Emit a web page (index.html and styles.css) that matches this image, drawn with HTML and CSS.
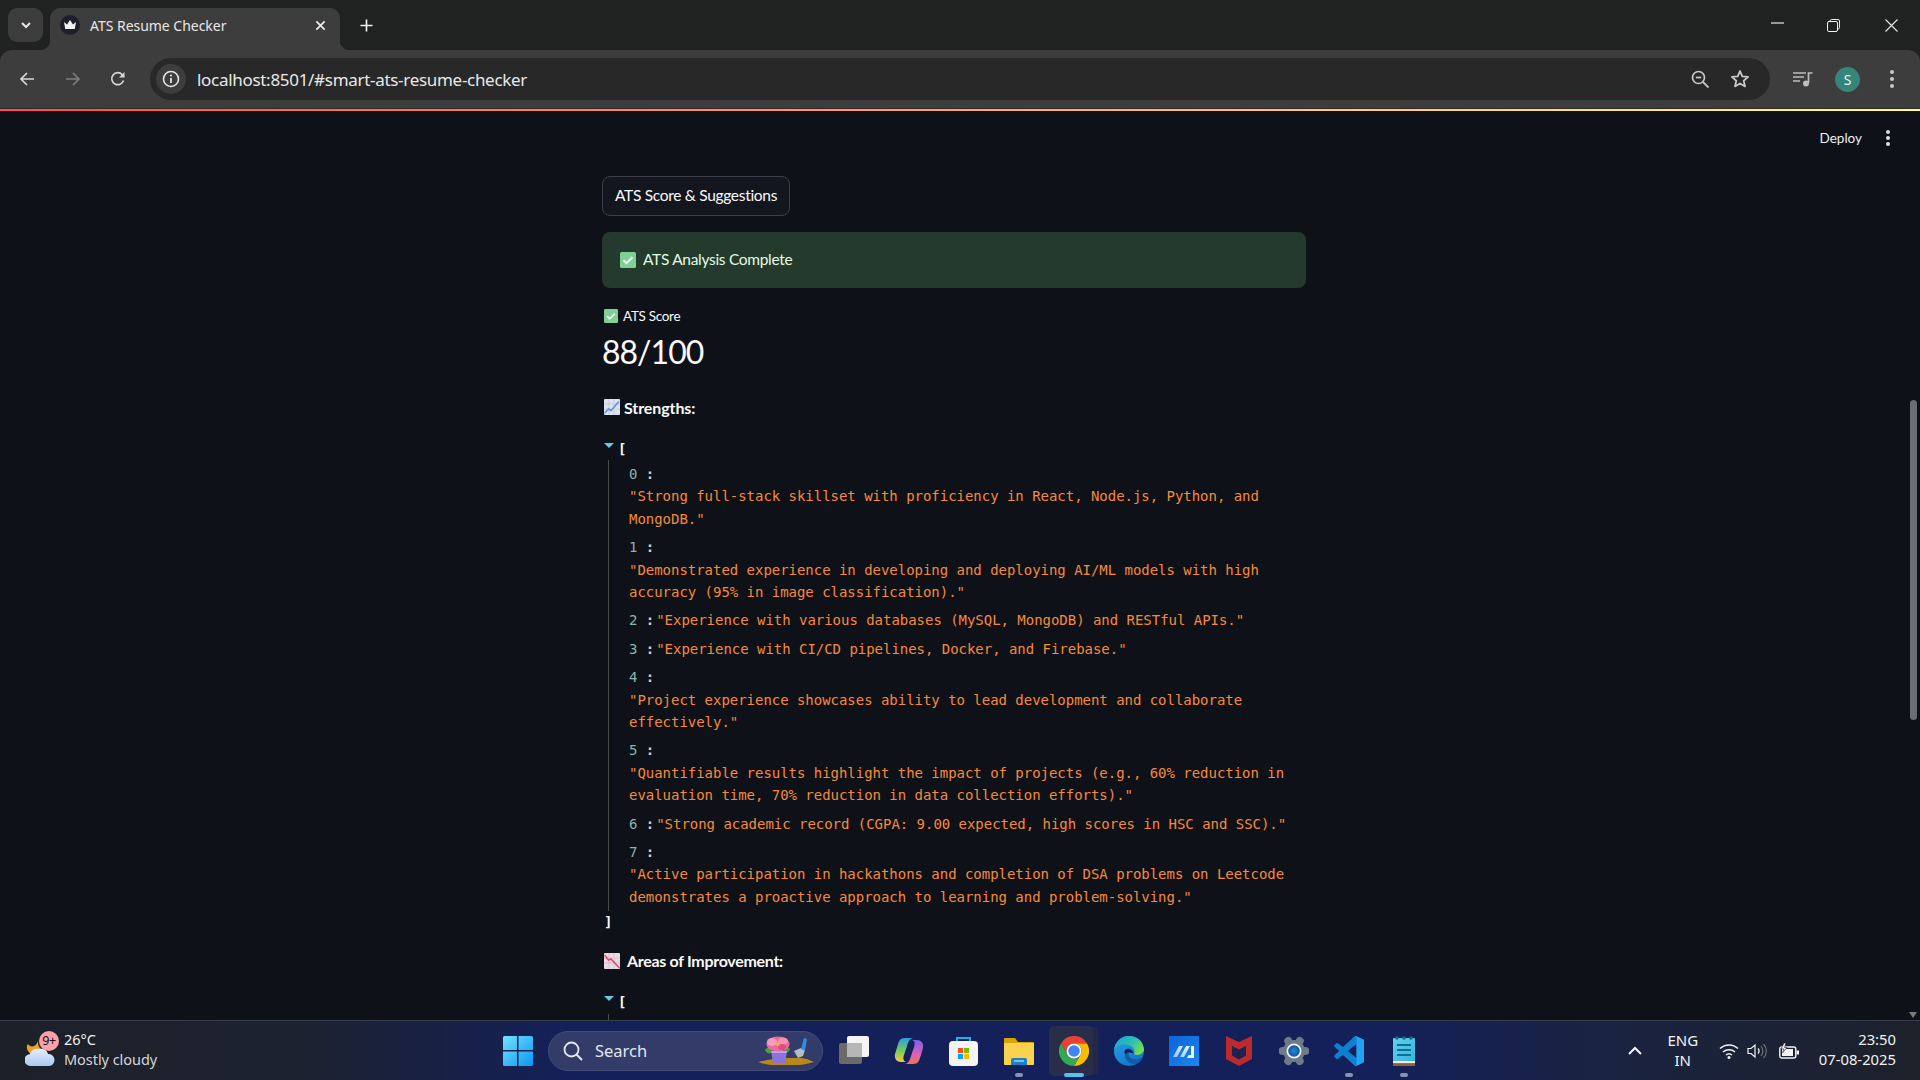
FILE: index.html
```html
<!DOCTYPE html>
<html lang="en">
<head>
<meta charset="utf-8">
<title>ATS Resume Checker</title>
<link rel="stylesheet" href="styles.css">
</head>
<body>
<div class="screen">
  <header class="chrome">
    <div class="tabstrip">
      <div class="tabsearch">
        <svg class="ic12" viewBox="0 0 12 12"><path d="M2 4l4 4 4-4" fill="none" stroke="#e8e8e8" stroke-width="2"/></svg>
      </div>
      <div class="tab">
        <span class="favicon"><svg viewBox="0 0 20 20" width="20" height="20"><circle cx="10" cy="10" r="10" fill="#1d1f2b"/><path d="M4 7l3 2.500L10 5l3 4.500L16 7l-1.200 7H5.200z" fill="#f2f2f2"/></svg></span>
        <span class="tabtitle">ATS Resume Checker</span>
        <svg class="tabclose" viewBox="0 0 12 12"><path d="M1.500 1.500l9 9M10.500 1.500l-9 9" stroke="#f0f0f0" stroke-width="1.800"/></svg>
      </div>
      <svg class="newtab" viewBox="0 0 14 14"><path d="M7 .5v13M.5 7h13" stroke="#f0f0f0" stroke-width="1.800"/></svg>
      <div class="wincontrols">
        <svg class="win-min" viewBox="0 0 13 2"><path d="M0 1h13" stroke="#e8e8e8" stroke-width="1.200"/></svg>
        <svg class="win-max" viewBox="0 0 13 13"><path d="M3 2.500V2a1.500 1.500 0 0 1 1.500-1.500H11A1.500 1.500 0 0 1 12.500 2v6.500A1.500 1.500 0 0 1 11 10h-.5" fill="none" stroke="#e8e8e8"/><rect x=".5" y="2.500" width="10" height="10" rx="1.500" fill="none" stroke="#f4f4f4"/></svg>
        <svg class="win-close" viewBox="0 0 13 13"><path d="M.5.500l12 12M12.500.500l-12 12" stroke="#e8e8e8" stroke-width="1.100"/></svg>
      </div>
    </div>
    <div class="toolbar">
      <svg class="nav nav-back" viewBox="0 0 16 16"><path d="M15 8H2M8 2L2 8l6 6" fill="none" stroke="#d6d6d6" stroke-width="1.700"/></svg>
      <svg class="nav nav-fwd" viewBox="0 0 16 16"><path d="M1 8h13M8 2l6 6-6 6" fill="none" stroke="#7d7d7d" stroke-width="1.700"/></svg>
      <svg class="nav nav-reload" viewBox="0 0 16 16"><path d="M13.500 9.500A6 6 0 1 1 12.300 3.700L14 5.500" fill="none" stroke="#d6d6d6" stroke-width="1.700"/><path d="M14.500 1v5.500H9z" fill="#d6d6d6"/></svg>
      <div class="omnibox">
        <span class="infochip"><svg viewBox="0 0 18 18" width="18" height="18"><circle cx="9" cy="9" r="7.500" fill="none" stroke="#e6e6e6" stroke-width="1.600"/><path d="M9 8v5" stroke="#e6e6e6" stroke-width="1.800"/><circle cx="9" cy="5.500" r="1.100" fill="#e6e6e6"/></svg></span>
        <span class="url">localhost:8501/#smart-ats-resume-checker</span>
        <svg class="omni-zoom" viewBox="0 0 18 18"><circle cx="7.500" cy="7.500" r="6" fill="none" stroke="#c8c8c8" stroke-width="1.700"/><path d="M12 12l5.500 5.500" stroke="#c8c8c8" stroke-width="1.800"/><path d="M4.800 7.500h5.400" stroke="#c8c8c8" stroke-width="1.700"/></svg>
        <svg class="omni-star" viewBox="0 0 20 20"><path d="M10 2l2.300 5.400 5.800.5-4.400 3.800 1.300 5.700-5-3-5 3 1.300-5.700L1.900 7.900l5.800-.5z" fill="none" stroke="#c8c8c8" stroke-width="1.800" stroke-linejoin="round"/></svg>
      </div>
      <svg class="tool-queue" viewBox="0 0 20 16"><path d="M0 2h13M0 6h11M0 10h7" stroke="#bdbdbd" stroke-width="1.700"/><path d="M15 2h4.500M15.500 1.500V12" stroke="#bdbdbd" stroke-width="1.700" fill="none"/><circle cx="13" cy="12.500" r="3" fill="#bdbdbd"/></svg>
      <span class="avatar">S</span>
      <span class="kebab"><i></i><i></i><i></i></span>
    </div>
    <div class="accent"></div>
  </header>

  <main class="main">
    <div class="page">
      <div class="appheader">
        <span class="deploy">Deploy</span>
        <span class="appmenu"><i></i><i></i><i></i></span>
      </div>
      <div class="content">
        <div class="btn">ATS Score &amp; Suggestions</div>
        <div class="alert">
          <svg class="emoji16" viewBox="0 0 16 16"><rect width="16" height="16" rx="1.500" fill="#80cf95"/><path d="M3.500 8.200l3 3 6-6" fill="none" stroke="#eefaf1" stroke-width="2"/></svg>
          <span class="alert-text">ATS Analysis Complete</span>
        </div>
        <div class="metric-label">
          <svg class="emoji14" viewBox="0 0 16 16"><rect width="16" height="16" rx="1.500" fill="#80cf95"/><path d="M3.500 8.200l3 3 6-6" fill="none" stroke="#eefaf1" stroke-width="2"/></svg>
          <span>ATS Score</span>
        </div>
        <div class="metric-value">88/100</div>
        <div class="section section-first">
          <svg class="emoji16" viewBox="0 0 16 16"><rect width="16" height="16" rx="1" fill="#dfe3f0"/><path d="M0 5h16M0 10h16M5 0v16M10 0v16" stroke="#b9bfd6" stroke-width=".6"/><path d="M.5 14l4-4 2.500 1.500L15 2.500" fill="none" stroke="#5d8fe0" stroke-width="1.500"/></svg>
          <span>Strengths:</span>
        </div>
        <div class="tree">
          <div class="tree-open"><span class="caret"></span><span class="bracket">[</span></div>
          <div class="tree-body">
            <div class="row"><span class="key">0 <b>:</b></span><span class="val">"Strong full-stack skillset with proficiency in React, Node.js, Python, and MongoDB."</span></div>
            <div class="row"><span class="key">1 <b>:</b></span><span class="val">"Demonstrated experience in developing and deploying AI/ML models with high accuracy (95% in image classification)."</span></div>
            <div class="row"><span class="key">2 <b>:</b></span><span class="val">"Experience with various databases (MySQL, MongoDB) and RESTful APIs."</span></div>
            <div class="row"><span class="key">3 <b>:</b></span><span class="val">"Experience with CI/CD pipelines, Docker, and Firebase."</span></div>
            <div class="row"><span class="key">4 <b>:</b></span><span class="val">"Project experience showcases ability to lead development and collaborate effectively."</span></div>
            <div class="row"><span class="key">5 <b>:</b></span><span class="val">"Quantifiable results highlight the impact of projects (e.g., 60% reduction in evaluation time, 70% reduction in data collection efforts)."</span></div>
            <div class="row"><span class="key">6 <b>:</b></span><span class="val">"Strong academic record (CGPA: 9.00 expected, high scores in HSC and SSC)."</span></div>
            <div class="row"><span class="key">7 <b>:</b></span><span class="val">"Active participation in hackathons and completion of DSA problems on Leetcode demonstrates a proactive approach to learning and problem-solving."</span></div>
          </div>
          <div class="tree-close">]</div>
        </div>
        <div class="section">
          <svg class="emoji16" viewBox="0 0 16 16"><rect width="16" height="16" rx="1" fill="#ecd9e4"/><path d="M0 5h16M0 10h16M5 0v16M10 0v16" stroke="#c9b7c6" stroke-width=".6"/><path d="M.5 2l4 5 2.500-1 8.500 9" fill="none" stroke="#e2476a" stroke-width="1.500"/></svg>
          <span class="section-wide">Areas of Improvement:</span>
        </div>
        <div class="tree">
          <div class="tree-open"><span class="caret"></span><span class="bracket">[</span></div>
          <div class="tree-body"><div class="row">&nbsp;</div></div>
        </div>
      </div>
    </div>
    <div class="scrollbar">
      <div class="thumb"></div>
      <div class="scroll-arrow"></div>
    </div>
  </main>

  <footer class="taskbar">
    <div class="weather">
      <span class="weather-icon">
        <svg viewBox="0 0 30 30" width="30" height="30"><defs><linearGradient id="cloud" x1="0" y1="0" x2="0" y2="1"><stop offset="0" stop-color="#e6effb"/><stop offset="1" stop-color="#a9c8f0"/></linearGradient></defs><path d="M14 2c-2 4-1 9 3 12L10 19C3 19 0 11 3 8c1 2 4 3 6 2 3-1 4-5 5-8z" fill="#efa02a"/><path d="M6 30a6 6 0 0 1-1-12c1-4 5-6 9-5 3-1 8 0 9 5a6 6 0 0 1 1 12z" fill="url(#cloud)"/></svg>
        <span class="badge">9+</span>
      </span>
      <span class="weather-text"><span class="temp">26°C</span><span class="cond">Mostly cloudy</span></span>
    </div>
    <svg class="startbtn" viewBox="0 0 30 30"><defs><linearGradient id="win" x1="0" y1="0" x2="1" y2="1"><stop offset="0" stop-color="#6fe3fb"/><stop offset="1" stop-color="#0c96f5"/></linearGradient></defs><path d="M0 1.500A1.500 1.500 0 0 1 1.500 0H14v14H0zM15.500 0H28.500A1.500 1.500 0 0 1 30 1.500V14H15.500zM0 15.500h14V30H1.500A1.500 1.500 0 0 1 0 28.500zM15.500 15.500H30v13a1.500 1.500 0 0 1-1.500 1.500H15.500z" fill="url(#win)"/></svg>
    <div class="searchbox">
      <svg class="search-ic" viewBox="0 0 20 20"><circle cx="8.500" cy="8.500" r="7" fill="none" stroke="#e6e8f0" stroke-width="1.800"/><path d="M13.500 13.500l5.500 5.500" stroke="#e6e8f0" stroke-width="2"/></svg>
      <span class="search-text">Search</span>
      <svg class="search-art" viewBox="0 0 56 30"><path d="M0 26Q14 23 20 22H44Q50 23 56 26Q46 29 40 29H14Q8 29 0 26z" fill="#b8881a"/><path d="M7 14c2-3 5-3 7 0l-1 3c-2 1-5 0-6-3zM32 13c-2-2-5-2-6 1l1 3c2 0 4-1 5-4z" fill="#4f9a48"/><path d="M36 15l7-3 4 2-2 6-5 2z" fill="#b6bcc4"/><path d="M43 13l3-11 3 1-2 12z" fill="#2e8fe0"/><path d="M13 15h16l-2 12H15z" fill="#8b72dc"/><path d="M13 15h16l-.5 2H13.500z" fill="#b9a6f0"/><ellipse cx="20" cy="8" rx="11.500" ry="7.500" fill="#ec6aa0"/><ellipse cx="14" cy="6" rx="5" ry="4" fill="#f79cc0"/><ellipse cx="25" cy="5" rx="5" ry="3.500" fill="#f58fb6"/><ellipse cx="24" cy="11" rx="4" ry="3" fill="#dd4d84"/><circle cx="20" cy="8" r="2" fill="#f3b23c"/></svg>
    </div>
    <div class="apps">
      <span class="app"><svg viewBox="0 0 30 30"><rect y="7" width="23" height="21" rx="2" fill="#6a6a6a"/><rect x="8" width="22" height="21" rx="2" fill="#f4f4f4"/><rect x="8" y="7" width="15" height="14" fill="#b6b6b6"/></svg></span>
      <span class="app"><svg viewBox="0 0 30 28"><defs><linearGradient id="cp1" x1="0" y1="0" x2="0" y2="1"><stop offset="0" stop-color="#2a9ee2"/><stop offset=".55" stop-color="#7ccb58"/><stop offset="1" stop-color="#f7c83c"/></linearGradient><linearGradient id="cp2" x1="0" y1="0" x2="0" y2="1"><stop offset="0" stop-color="#7d5fe4"/><stop offset=".6" stop-color="#dc62b8"/><stop offset="1" stop-color="#f5704a"/></linearGradient></defs><path d="M19 27C24 27 25 24 26 21L29 11C30 6 27 3 23 3L18 3C21 4 21 7 20 10L16 22C15 25 13 27 10 27Z" fill="url(#cp2)"/><path d="M11 1C6 1 5 4 4 7L1 17C0 22 3 25 7 25L12 25C9 24 9 21 10 18L14 6C15 3 17 1 20 1Z" fill="url(#cp1)"/></svg></span>
      <span class="app"><svg viewBox="0 0 30 30"><path d="M8 7V2h13v5" fill="none" stroke="#19b3e8" stroke-width="2"/><rect y="5" width="29" height="25" rx="4" fill="#f4f4f4"/><rect x="9" y="12" width="5" height="5" fill="#f25022"/><rect x="15" y="12" width="5" height="5" fill="#7fba00"/><rect x="9" y="18" width="5" height="5" fill="#00a4ef"/><rect x="15" y="18" width="5" height="5" fill="#ffb900"/></svg></span>
      <span class="app has-dot"><svg viewBox="0 0 30 30"><path d="M0 3a1 1 0 0 1 1-1h10l3 4h15a1 1 0 0 1 1 1v6H0z" fill="#d9a406"/><path d="M0 7h30v21a1 1 0 0 1-1 1H1a1 1 0 0 1-1-1z" fill="#fbd24e"/><path d="M7 24a2 2 0 0 1 2-2h12a2 2 0 0 1 2 2v5H7z" fill="#1e7fc9"/><path d="M10 25h10" stroke="#9ad0f5" stroke-width="1.500"/></svg></span>
      <span class="app app-active"><svg viewBox="0 0 30 30"><path d="M2 7.500A15 15 0 0 1 28 7.500H15A7.500 7.500 0 0 0 8.500 18.750z" fill="#e94235"/><path d="M28 7.500A15 15 0 0 1 15 30L21.500 18.750A7.500 7.500 0 0 0 15 7.500H28z" fill="#fbbc04"/><path d="M15 30A15 15 0 0 1 2 7.500L8.500 18.750A7.500 7.500 0 0 0 21.500 18.750z" fill="#34a853"/><circle cx="15" cy="15" r="7.500" fill="#fff"/><circle cx="15" cy="15" r="5.800" fill="#4285f4"/></svg><i class="run-bar"></i></span>
      <span class="app"><svg viewBox="0 0 30 30"><defs><linearGradient id="edg1" x1="0" y1="0" x2="1" y2=".6"><stop offset="0" stop-color="#1c9fd8"/><stop offset=".6" stop-color="#2cc2b0"/><stop offset="1" stop-color="#74dc50"/></linearGradient><linearGradient id="edg2" x1="0" y1="0" x2=".7" y2="1"><stop offset="0" stop-color="#29a6e8"/><stop offset="1" stop-color="#1272c8"/></linearGradient></defs><circle cx="15" cy="15" r="15" fill="url(#edg2)"/><path d="M15 0C7 0 1 6 0 14c3-5 9-7 14-5 5 1 8 5 6 9 3 2 7 1 9-2 1-1 1-2 1-3C29 5 23 0 15 0z" fill="url(#edg1)"/><path d="M11 17c-1 6 4 12 12 11 3-2 5-4 6-8-2 3-6 4-10 3-3-1-5-3-4-6z" fill="#0f5ba8"/><path d="M20 18c-1-3-4-6-7-5s-3 3-2 5c2-2 6-2 9 0z" fill="#12205a"/></svg></span>
      <span class="app"><svg viewBox="0 0 30 30"><defs><linearGradient id="mat" x1="0" y1="0" x2="1" y2="1"><stop offset="0" stop-color="#0a66dc"/><stop offset="1" stop-color="#1a86ee"/></linearGradient><linearGradient id="slash" x1="0" y1="1" x2="1" y2="0"><stop offset="0" stop-color="#8fc4f6"/><stop offset="1" stop-color="#f0f8ff"/></linearGradient></defs><rect width="30" height="30" fill="url(#mat)"/><path d="M4 21l6-11h4l-6 11zM11 21l6-11h4l-6 11z" fill="url(#slash)"/><path d="M22 10h3v12h-7l1.500-3H22z" fill="#eef6fe"/></svg></span>
      <span class="app"><svg viewBox="0 0 30 30"><path d="M2 0l13 6 13-6v23l-13 7-13-7z" fill="#bb2a2c"/><path d="M8 10l7 3.500 7-3.500v9.500l-7 4-7-4z" fill="#1b2350"/></svg></span>
      <span class="app"><svg viewBox="0 0 30 30"><defs><radialGradient id="disc"><stop offset="0" stop-color="#2f86d8"/><stop offset="1" stop-color="#0c56a0"/></radialGradient></defs><g stroke="#6f7a87" stroke-width="8" stroke-linecap="round"><path d="M3.500 15h23M9.250 5l11.500 20M20.750 5L9.250 25"/></g><circle cx="15" cy="15" r="11" fill="#6f7a87"/><circle cx="15" cy="15" r="7.500" fill="#f2f4f6"/><circle cx="15" cy="15" r="5.800" fill="url(#disc)"/></svg></span>
      <span class="app has-dot"><svg viewBox="0 0 100 100"><path fill-rule="evenodd" d="M96 11 75 1a6 6 0 0 0-7 1L30 37 13 24a4 4 0 0 0-5 0L2 30a4 4 0 0 0 0 6L17 50 2 64a4 4 0 0 0 0 6L8 76a4 4 0 0 0 5 0L30 63 68 98a6 6 0 0 0 7 1L96 89a6 6 0 0 0 4-5V17a6 6 0 0 0-4-6zM75 27 46 50 75 73z" fill="#0f80d0"/><path d="M68 98a6 6 0 0 0 7 1L96 89a6 6 0 0 0 4-5V17a6 6 0 0 0-4-6L75 1a6 6 0 0 0-7 1c3-2 7 0 7 4V94c0 4-4 6-7 4z" fill="#22a3ef"/></svg></span>
      <span class="app has-dot"><svg viewBox="0 0 30 30"><defs><linearGradient id="pad" x1="0" y1="0" x2="1" y2="1"><stop offset="0" stop-color="#62d0ea"/><stop offset="1" stop-color="#35b4dc"/></linearGradient></defs><rect x="4" y="2" width="22" height="25" rx="1" fill="url(#pad)"/><rect x="4" y="25" width="22" height="2.500" fill="#eeeeee"/><rect x="4" y="27.500" width="22" height="2.500" fill="#a25a22"/><path d="M8 9h14M8 14h14M8 19h14" stroke="#0c6f9a" stroke-width="2"/><circle cx="8" cy="2" r="1.800" fill="#0f6e8c"/><circle cx="15" cy="2" r="1.800" fill="#0f6e8c"/><circle cx="22" cy="2" r="1.800" fill="#0f6e8c"/></svg></span>
    </div>
    <div class="tray">
      <svg class="tray-chev" viewBox="0 0 14 9"><path d="M1 8l6-6 6 6" fill="none" stroke="#f4f4f4" stroke-width="2"/></svg>
      <span class="lang"><span>ENG</span><span>IN</span></span>
      <svg class="tray-wifi" viewBox="0 0 20 16"><path d="M1 5.500a13 13 0 0 1 18 0M4 9a9 9 0 0 1 12 0M7 12a4.500 4.500 0 0 1 6 0" fill="none" stroke="#f4f4f4" stroke-width="1.500"/><circle cx="10" cy="14.500" r="1.500" fill="#f4f4f4"/></svg>
      <svg class="tray-vol" viewBox="0 0 20 16"><path d="M1 5.500h3L8 2v12L4 10.500H1z" fill="none" stroke="#f4f4f4" stroke-width="1.200"/><path d="M11 5.500a3.500 3.500 0 0 1 0 5" fill="none" stroke="#f4f4f4" stroke-width="1.300"/><path d="M14 3a7.500 7.500 0 0 1 0 10M16.500 1a10 10 0 0 1 0 14" fill="none" stroke="#777" stroke-width="1.100"/></svg>
      <svg class="tray-bat" viewBox="0 0 20 16"><rect x=".8" y="4" width="16" height="11" rx="2" fill="none" stroke="#f4f4f4" stroke-width="1.400"/><rect x="3" y="6" width="11" height="7" fill="#f4f4f4"/><rect x="17.500" y="7.500" width="2.500" height="4" fill="#f4f4f4"/><path d="M5 0L2 6h3L3.500 10 8 4.500H5.500L7 0z" fill="#f4f4f4" stroke="#1c212a" stroke-width=".6"/></svg>
      <span class="clock"><span>23:50</span><span>07-08-2025</span></span>
    </div>
  </footer>
</div>
</body>
</html>
```
FILE: styles.css
```css
* { box-sizing: border-box; }
html, body { margin: 0; padding: 0; height: 100%; overflow: hidden; background: #0f1118; }
svg { display: block; flex: none; }

.screen { width: 1920px; height: 1080px; display: flex; flex-direction: column; overflow: hidden; font-family: "Noto Sans", sans-serif; }

/* browser chrome */
.chrome { flex: none; background: #202222; }
.tabstrip { height: 50px; display: flex; align-items: flex-start; padding: 8px 0 0 8px; }
.tabsearch { width: 35px; height: 34px; border-radius: 9px; background: #3c3c3c; display: flex; align-items: center; justify-content: center; }
.ic12 { width: 12px; height: 12px; }
.tab { width: 290px; height: 42px; margin-left: 7px; padding: 0 13px 8px 10px; background: #3d3d3d; border-radius: 10px 10px 0 0; display: flex; align-items: center; position: relative; }
.tab::before, .tab::after { content: ""; position: absolute; bottom: 0; width: 10px; height: 10px; }
.tab::before { left: -10px; background: radial-gradient(circle at 0 0, transparent 10px, #3d3d3d 10.500px); }
.tab::after { right: -10px; background: radial-gradient(circle at 100% 0, transparent 10px, #3d3d3d 10.500px); }
.favicon { width: 20px; height: 20px; flex: none; }
.tabtitle { margin-left: 10px; color: #e8e8e8; font-size: 14px; flex: 1; white-space: nowrap; letter-spacing: -.03px; }
.tabclose { width: 11px; height: 11px; margin-right: 1px; }
.newtab { width: 13px; height: 13px; margin: 11px 0 0 20px; }
.wincontrols { margin-left: auto; display: flex; align-items: center; height: 30px; padding-right: 22px; margin-top: 2px; }
.win-min { width: 13px; height: 2px; margin-right: 43px; margin-top: -4px; }
.win-max { width: 13px; height: 13px; margin-right: 45px; }
.win-close { width: 13px; height: 13px; }

.toolbar { height: 58px; background: #3d3d3d; border-radius: 12px 12px 0 0; display: flex; align-items: center; padding: 0 0 0 19px; }
.nav { width: 16px; height: 16px; }
.nav-fwd { margin-left: 30px; }
.nav-reload { margin-left: 29px; }
.omnibox { width: 1620px; height: 42px; margin-left: 24px; border-radius: 21px; background: #282828; display: flex; align-items: center; padding-left: 6px; }
.infochip { width: 30px; height: 30px; border-radius: 50%; background: #3d3d3d; display: flex; align-items: center; justify-content: center; flex: none; }
.url { margin-left: 11px; color: #e8e8e8; font-size: 17px; letter-spacing: -.3px; white-space: nowrap; flex: 1; }
.omni-zoom { width: 18px; height: 18px; }
.omni-star { width: 20px; height: 20px; margin: 0 20px 0 21px; }
.tool-queue { width: 20px; height: 16px; margin-left: 23px; }
.avatar { width: 25px; height: 25px; margin-left: 22px; border-radius: 50%; background: #36857a; color: #e6f4f1; font-size: 14px; display: flex; align-items: center; justify-content: center; flex: none; }
.kebab { display: flex; flex-direction: column; gap: 3px; margin-left: 30px; }
.kebab i { width: 4px; height: 4px; border-radius: 50%; background: #c8c8c8; display: block; }
.accent { height: 3px; border-top: 1px solid #2b2b2b; background: linear-gradient(90deg, #ff4b4b, #fffd80); background-clip: padding-box; }

/* app */
.main { flex: 1; min-height: 0; display: flex; background: #0f1118; overflow: hidden; position: relative; }
.page { flex: 1; min-width: 0; overflow: hidden; }
.appheader { height: 54px; display: flex; align-items: center; justify-content: flex-end; padding-right: 18px; }
.deploy { color: #e8f0f8; font-family: Lato, sans-serif; font-size: 13.500px; }
.appmenu { display: flex; flex-direction: column; gap: 2px; margin-left: 24px; }
.appmenu i { width: 4px; height: 4px; border-radius: 50%; background: #dcdcdc; display: block; }
.content { width: 704px; margin: 11px auto 0; color: #fafafa; font-family: Lato, sans-serif; }
.btn { display: inline-flex; align-items: center; height: 40px; padding: 0 12px 2px; border: 1px solid #3b3e48; border-radius: 8px; background: #13161f; font-size: 15.500px; letter-spacing: -.3px; white-space: nowrap; }
.alert { height: 56px; margin-top: 16px; padding: 0 18px; border-radius: 8px; background: #233a2c; color: #e2fbe6; font-size: 15.500px; letter-spacing: -.3px; display: flex; align-items: center; gap: 7px; }
.alert-text { padding-bottom: 2px; }
.emoji16 { width: 16px; height: 16px; }
.emoji14 { width: 14px; height: 14px; }
.metric-label { height: 22px; margin-top: 17px; padding-left: 2px; display: flex; align-items: center; gap: 5px; font-size: 13.500px; letter-spacing: -.3px; }
.metric-value { height: 46px; margin-top: 2px; font-size: 32px; line-height: 46px; letter-spacing: -1px; }
.section { height: 26px; margin-top: 14px; padding-left: 2px; display: flex; align-items: center; gap: 4px; font-size: 16px; font-weight: 700; letter-spacing: -.1px; }
.section-first { margin-top: 19px; }
.section-wide { margin-left: 3px; letter-spacing: -.3px; }
.tree { margin-top: 17.600px; font-family: "DejaVu Sans Mono", monospace; font-size: 14px; line-height: 22.400px; letter-spacing: -.03px; }
.tree-open { height: 22.400px; display: flex; padding-left: 2px; }
.caret { width: 0; height: 0; margin: 5px 4px 0 0; border-left: 5px solid transparent; border-right: 5px solid transparent; border-top: 5px solid #6ec6e6; }
.bracket { font-weight: 700; color: #fafafa; }
.tree-body { margin-left: 6px; padding-left: 20px; border-left: 1px solid #4a4a46; }
.row { padding: 3px 0; }
.key { color: #8db4ad; margin-right: 2px; }
.key b { color: #d0d0d0; font-weight: 700; }
.val { color: #f58a3a; display: inline-block; }
.tree-close { height: 22.400px; padding-left: 2px; font-weight: 700; }

.scrollbar { width: 12px; flex: none; display: flex; flex-direction: column; align-items: center; }
.thumb { width: 7px; height: 320px; margin-top: 289px; margin-right: 2px; border-radius: 4px; background: #6c6e73; }
.scroll-arrow { width: 0; height: 0; margin-top: auto; margin-bottom: 2px; margin-right: 2px; border-left: 4px solid transparent; border-right: 4px solid transparent; border-top: 6px solid #7a7a7a; }

/* taskbar */
.taskbar { flex: none; height: 60px; border-top: 1px solid #3a3e4c; background: linear-gradient(90deg, #1c2029 0, #1c2230 16%, #14205a 30%, #14205a 72%, #1a2340 84%, #1c212a 100%); display: flex; align-items: center; color: #f2f2f2; font-family: "Noto Sans", sans-serif; }
.weather { width: 503px; padding-left: 25px; display: flex; align-items: center; flex: none; }
.weather-icon { width: 30px; height: 30px; position: relative; flex: none; }
.badge { position: absolute; left: 14px; top: -5px; width: 20px; height: 20px; border-radius: 50%; background: #ffa0a8; color: #111; font-size: 12.500px; line-height: 20px; text-align: center; letter-spacing: -.3px; }
.weather-text { margin: 0 0 4px 9px; display: flex; flex-direction: column; font-size: 14.500px; line-height: 20px; }
.cond { color: #d6d6d6; letter-spacing: -.05px; }
.startbtn { width: 30px; height: 30px; }
.searchbox { width: 275px; height: 40px; margin-left: 15px; padding: 0 8px 0 14px; border-radius: 20px; background: #333c69; border: 1px solid #434c78; display: flex; align-items: center; }
.search-ic { width: 20px; height: 20px; }
.search-text { margin-left: 12px; font-size: 16.500px; color: #e4e6ee; flex: 1; }
.search-art { width: 56px; height: 30px; }
.apps { margin-left: 16px; display: flex; gap: 25px; align-items: center; }
.app { width: 30px; height: 30px; position: relative; display: block; flex: none; }
.app svg { width: 30px; height: 30px; }
.app-active::before { content: ""; position: absolute; left: -10px; top: -10px; width: 44px; height: 50px; border-radius: 5px; background: #282d4a; box-shadow: 6px 0 0 -1px #222845; }
.app-active svg { position: relative; }
.run-bar { position: absolute; left: 5px; top: 37px; width: 20px; height: 4px; border-radius: 2px; background: #58c0f8; }
.has-dot::after { content: ""; position: absolute; left: 11px; top: 37px; width: 8px; height: 4px; border-radius: 2px; background: #8d93a6; }
.tray { margin-left: auto; padding-right: 24px; display: flex; align-items: center; }
.tray-chev { width: 14px; height: 9px; }
.lang { width: 30px; margin: 0 0 2px 26px; display: flex; flex-direction: column; align-items: center; font-size: 15px; line-height: 20px; }
.tray-wifi { width: 20px; height: 16px; margin-left: 21px; }
.tray-vol { width: 20px; height: 16px; margin-left: 8px; }
.tray-bat { width: 20px; height: 16px; margin-left: 12px; }
.clock { margin: 0 0 4px 20px; display: flex; flex-direction: column; align-items: flex-end; font-size: 14.800px; line-height: 20px; white-space: nowrap; }
```
